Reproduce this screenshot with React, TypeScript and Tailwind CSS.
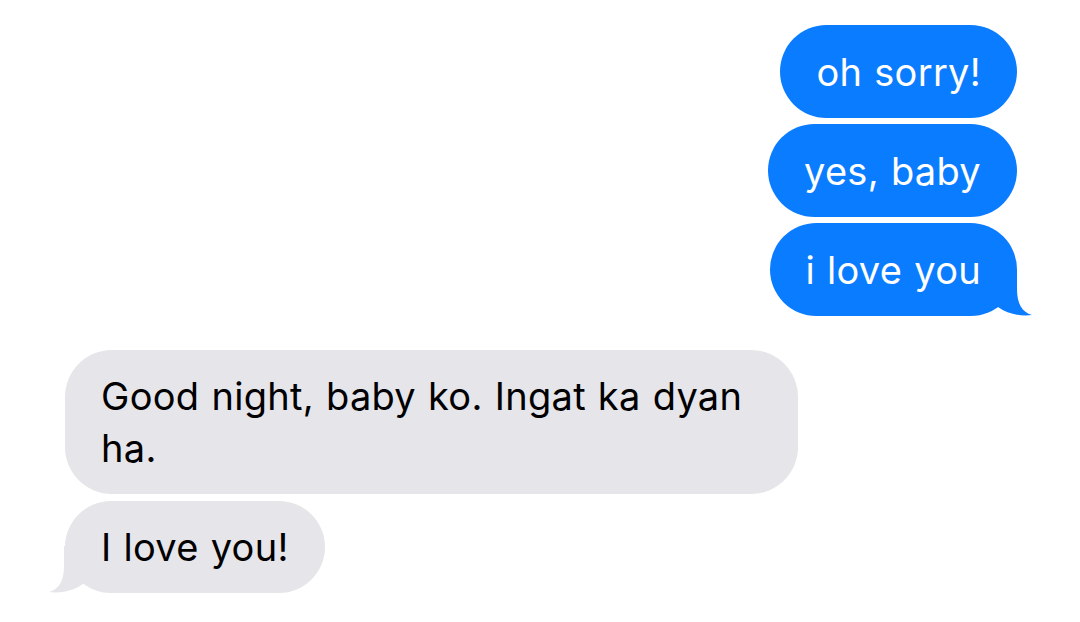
type Msg = { id: number; text: string; tail?: boolean };

const sent: Msg[] = [
  { id: 1, text: "oh sorry!" },
  { id: 2, text: "yes, baby" },
  { id: 3, text: "i love you", tail: true },
];

const received: Msg[] = [
  { id: 4, text: "Good night, baby ko. Ingat ka dyan ha." },
  { id: 5, text: "I love you!", tail: true },
];

const SentTail = () => (
  <svg className="absolute right-[-16px] bottom-0" width="48" height="52" viewBox="0 0 48 52">
    <path d="M0 5 L32 5 L32 25 C32 40 37 48 47 51 C35 52.5 23 50 13 43 Z" fill="#0a7cff" />
  </svg>
);

const ReceivedTail = () => (
  <svg className="absolute left-[-17px] bottom-0" width="48" height="52" viewBox="0 0 48 52">
    <path d="M48 5 L16 5 L16 25 C16 40 11 48 1 51 C13 52.5 25 50 35 43 Z" fill="#e5e5ea" />
  </svg>
);

export default function App() {
  return (
    <div className="w-[1080px] h-[622px] bg-white overflow-hidden px-[63px] pt-[25px] font-['Inter',sans-serif] text-[38px] leading-[52px] tracking-[0.3px] [word-spacing:1px]">
      <div className="flex flex-col items-end gap-[6px]">
        {sent.map((m) => (
          <div key={m.id} className="relative rounded-[47px] bg-[#0a7cff] text-white px-[36px] py-[20.5px]">
            {m.tail && <SentTail />}
            <span className="relative">{m.text}</span>
          </div>
        ))}
      </div>

      <div className="flex flex-col items-start gap-[7px] mt-[34px] pl-[2px]">
        {received.map((m) => (
          <div key={m.id} className="relative w-fit max-w-[733px] rounded-[47px] bg-[#e5e5ea] text-black px-[36px] py-[20px]">
            {m.tail && <ReceivedTail />}
            <span className="relative">{m.text}</span>
          </div>
        ))}
      </div>
    </div>
  );
}
